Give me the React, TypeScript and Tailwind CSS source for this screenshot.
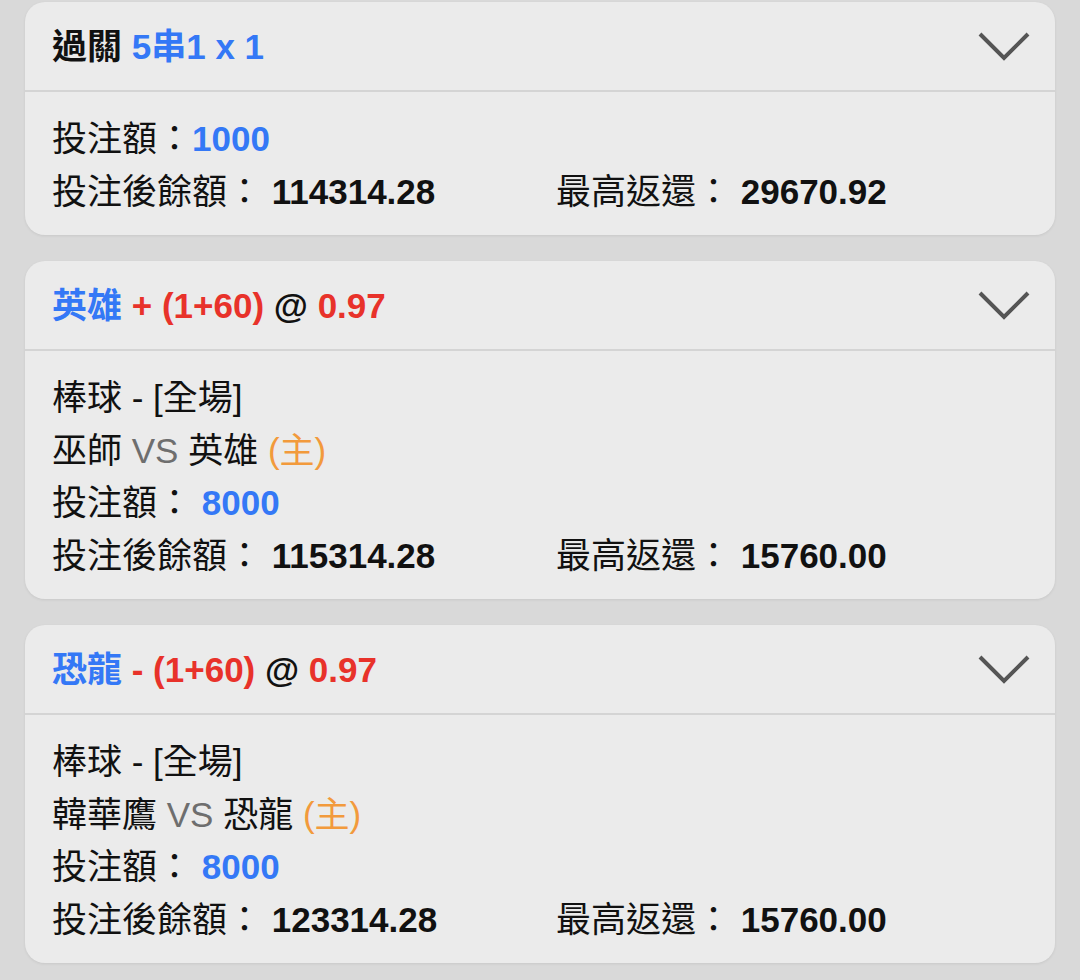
import React from "react";

const FONT = { fontFamily: '"Liberation Sans", "Noto Sans CJK TC", sans-serif' };

function Chevron() {
  return (
    <svg width="52" height="30" viewBox="0 0 52 30" className="shrink-0">
      <polyline points="2,3 26,27 50,3" fill="none" stroke="#555555" strokeWidth="4" strokeLinecap="butt" strokeLinejoin="miter" />
    </svg>
  );
}

function Card({ header, children }: { header: React.ReactNode; children: React.ReactNode }) {
  return (
    <div className="mx-[25px] rounded-[20px] bg-[#ebebeb] shadow-[0_1px_3px_rgba(0,0,0,0.08)] overflow-hidden">
      <div className="h-[88px] flex items-center justify-between pl-[27px] pr-[25px]">
        <div className="text-[35px] font-bold leading-none whitespace-nowrap">{header}</div>
        <Chevron />
      </div>
      <div className="h-[2px] bg-[#d4d4d4]" />
      <div className="pl-[27px] pt-[21px] pb-[17px] text-[35px] leading-[52.5px] text-[#111]">{children}</div>
    </div>
  );
}

function BottomRow({ left, right }: { left: string; right: string }) {
  return (
    <div className="flex whitespace-nowrap">
      <div className="w-[504px]">
        投注後餘額： <span className="font-bold">{left}</span>
      </div>
      <div>
        最高返還： <span className="font-bold">{right}</span>
      </div>
    </div>
  );
}

export default function App() {
  return (
    <div className="min-h-[980px] bg-[#d9d9d9] pt-[2px] flex flex-col gap-[26px]" style={FONT}>
      <Card
        header={
          <>
            <span className="text-[#111]">過關 </span>
            <span className="text-[#3478f6]">5串1 x 1</span>
          </>
        }
      >
        <div>
          投注額：<span className="font-bold text-[#3478f6]">1000</span>
        </div>
        <BottomRow left="114314.28" right="29670.92" />
      </Card>

      <Card
        header={
          <>
            <span className="text-[#3478f6]">英雄 </span>
            <span className="text-[#e8322a]">+ (1+60) </span>
            <span className="text-[#111]">@ </span>
            <span className="text-[#e8322a]">0.97</span>
          </>
        }
      >
        <div>棒球 - [全場]</div>
        <div>
          巫師 <span className="text-[#6e6e6e]">VS</span> 英雄 <span className="text-[#f29a3c]">(主)</span>
        </div>
        <div>
          投注額： <span className="font-bold text-[#3478f6]">8000</span>
        </div>
        <BottomRow left="115314.28" right="15760.00" />
      </Card>

      <Card
        header={
          <>
            <span className="text-[#3478f6]">恐龍 </span>
            <span className="text-[#e8322a]">- (1+60) </span>
            <span className="text-[#111]">@ </span>
            <span className="text-[#e8322a]">0.97</span>
          </>
        }
      >
        <div>棒球 - [全場]</div>
        <div>
          韓華鷹 <span className="text-[#6e6e6e]">VS</span> 恐龍 <span className="text-[#f29a3c]">(主)</span>
        </div>
        <div>
          投注額： <span className="font-bold text-[#3478f6]">8000</span>
        </div>
        <BottomRow left="123314.28" right="15760.00" />
      </Card>
    </div>
  );
}
